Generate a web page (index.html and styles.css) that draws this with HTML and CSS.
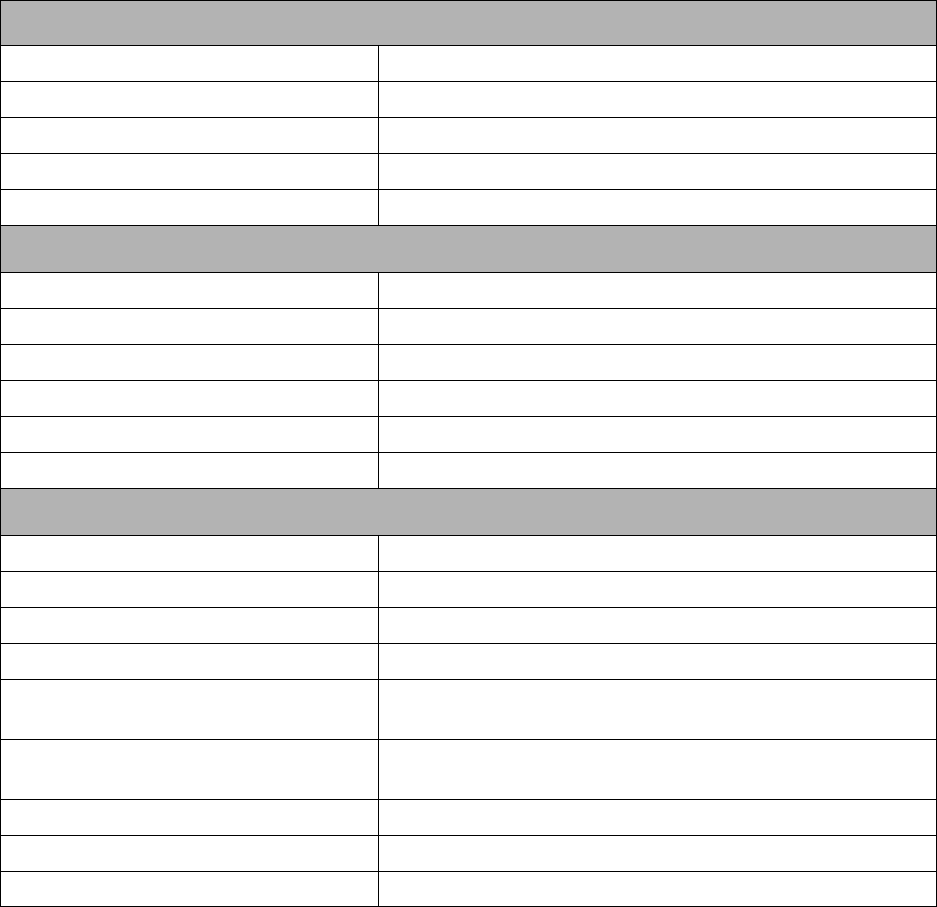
FILE: index.html
```html
<!DOCTYPE html>
<html>
<head>
<meta charset="utf-8">
<link rel="stylesheet" href="styles.css">
</head>
<body>
<div class="sheet">
  <div class="head head-first"></div>
  <div class="row"><div class="cell"></div><div class="cell"></div></div>
  <div class="row"><div class="cell"></div><div class="cell"></div></div>
  <div class="row"><div class="cell"></div><div class="cell"></div></div>
  <div class="row"><div class="cell"></div><div class="cell"></div></div>
  <div class="row"><div class="cell"></div><div class="cell"></div></div>
  <div class="head"></div>
  <div class="row"><div class="cell"></div><div class="cell"></div></div>
  <div class="row"><div class="cell"></div><div class="cell"></div></div>
  <div class="row"><div class="cell"></div><div class="cell"></div></div>
  <div class="row"><div class="cell"></div><div class="cell"></div></div>
  <div class="row"><div class="cell"></div><div class="cell"></div></div>
  <div class="row"><div class="cell"></div><div class="cell"></div></div>
  <div class="head"></div>
  <div class="row"><div class="cell"></div><div class="cell"></div></div>
  <div class="row"><div class="cell"></div><div class="cell"></div></div>
  <div class="row"><div class="cell"></div><div class="cell"></div></div>
  <div class="row"><div class="cell"></div><div class="cell"></div></div>
  <div class="row row-tall"><div class="cell"></div><div class="cell"></div></div>
  <div class="row row-tall"><div class="cell"></div><div class="cell"></div></div>
  <div class="row"><div class="cell"></div><div class="cell"></div></div>
  <div class="row"><div class="cell"></div><div class="cell"></div></div>
  <div class="row row-last"><div class="cell"></div><div class="cell"></div></div>
</div>
</body>
</html>
```
FILE: styles.css
```css
html, body {
  margin: 0;
  padding: 0;
  background: #ffffff;
  font-family: "Liberation Sans", Arial, sans-serif;
}

.sheet {
  width: 937px;
  box-sizing: border-box;
  border: 1px solid #000;
  display: flex;
  flex-direction: column;
}

.head {
  height: 47px;
  box-sizing: border-box;
  background: #b3b3b3;
  border-bottom: 1px solid #000;
}

.head-first {
  height: 45px;
}

.row {
  display: grid;
  grid-template-columns: 378px 1fr;
  height: 36px;
  box-sizing: border-box;
  border-bottom: 1px solid #000;
}

.row-tall {
  height: 60px;
}

.row-last {
  border-bottom: none;
  height: 34px;
}

.cell {
  box-sizing: border-box;
}

.cell:first-child {
  border-right: 1px solid #000;
}
```
